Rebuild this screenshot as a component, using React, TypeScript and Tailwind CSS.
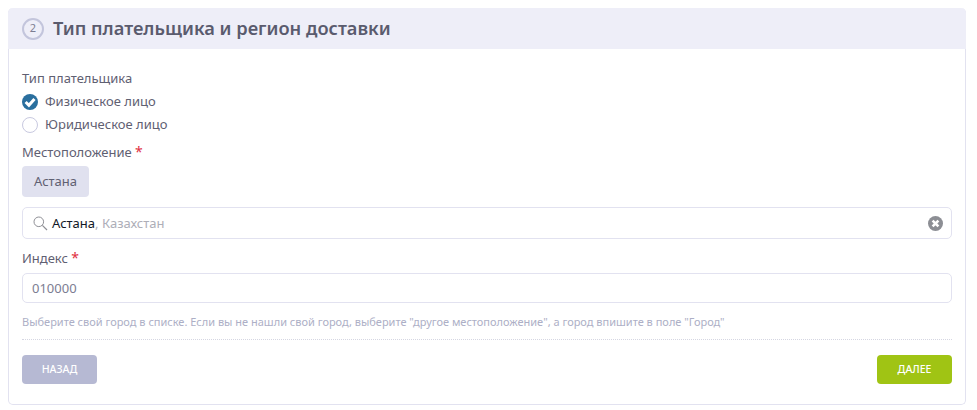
import React from "react";

const App = () => {
  return (
    <div className="h-[410px] w-[977px] bg-white pl-2 pr-[11px] pt-2 font-['Noto_Sans','Open_Sans',sans-serif] text-[13px] text-[#5f6072]">
      <div className="h-[397px] rounded-[5px] border border-t-0 border-[#e2e2f0]">
        {/* Header */}
        <div className="-mx-px flex h-[41px] items-center gap-[9px] rounded-t-[5px] bg-[#eeeef8] pl-[14px]">
          <div className="flex h-[22px] w-[22px] items-center justify-center rounded-full border-2 border-[#c3c5dc] text-[11px] text-[#7c7d92]">
            2
          </div>
          <h2 className="text-[18.25px] font-semibold leading-none text-[#5a5b6e]">
            Тип плательщика и регион доставки
          </h2>
        </div>

        <div className="px-[13px] pt-[19px]">
          <div className="h-[20px] leading-[20px]">Тип плательщика</div>

          {/* Radios */}
          <div className="mt-[2px] flex h-[23px] items-center gap-[7px]">
            <svg width="16" height="16" viewBox="0 0 16 16">
              <circle cx="8" cy="8" r="8" fill="#2a6f9e" />
              <path d="M3.6 8 L6.9 11.3 L12.5 5" fill="none" stroke="#fff" strokeWidth="3" />
            </svg>
            <span>Физическое лицо</span>
          </div>
          <div className="flex h-[23px] items-center gap-[7px]">
            <div className="h-4 w-4 rounded-full border-[1.5px] border-[#c8c9e0] bg-white" />
            <span>Юридическое лицо</span>
          </div>

          {/* Location */}
          <div className="mt-[5px] h-[20px] leading-[22px]">
            Местоположение <span className="text-[14px] leading-none text-[#e0303f]">*</span>
          </div>
          <div className="mt-[5px] flex h-[31px] w-[67px] items-center justify-center rounded-[4px] bg-[#e0e1ef]">
            Астана
          </div>
          <div className="mt-[10px] flex h-[32px] items-center rounded-[5px] border border-[#e2e2f0] pl-[10px] pr-[8px]">
            <svg width="15" height="15" viewBox="0 0 15 15" fill="none" stroke="#8f9096">
              <circle cx="5.8" cy="5.8" r="4.8" strokeWidth="1" />
              <path d="M9.4 9.4 L14 14" strokeWidth="1.2" />
            </svg>
            <span className="ml-[4px] pt-[2px] text-[#111827]">Астана</span>
            <span className="pt-[2px] text-[#adaeb8]">, Казахстан</span>
            <svg className="ml-auto" width="15" height="15" viewBox="0 0 15 15">
              <circle cx="7.5" cy="7.5" r="7.5" fill="#8c8e94" />
              <path d="M4.6 4.6 L10.4 10.4 M10.4 4.6 L4.6 10.4" stroke="#fff" strokeWidth="2.6" />
            </svg>
          </div>

          {/* Postcode */}
          <div className="mt-2 h-[20px] leading-[22px]">
            Индекс <span className="text-[14px] leading-none text-[#e0303f]">*</span>
          </div>
          <div className="mt-[6px] flex h-[30px] items-center rounded-[5px] border border-[#e2e2f0] px-[9px] pt-[2px] text-[#7c7d92]">
            010000
          </div>
          <p className="mt-[11px] h-[15px] text-[11px] leading-[15px] text-[#adafc6]">
            Выберите свой город в списке. Если вы не нашли свой город, выберите "другое местоположение", а город впишите в поле "Город"
          </p>
          <div className="mt-[10px] border-t border-dotted border-[#d5d6e2]" />

          {/* Buttons */}
          <div className="mt-[15px] flex justify-between">
            <button className="h-[29px] w-[75px] rounded-[4px] bg-[#b6b9d3] text-[10.5px] font-medium text-white">
              НАЗАД
            </button>
            <button className="h-[29px] w-[75px] rounded-[4px] bg-[#a0c414] text-[10.5px] font-medium text-white">
              ДАЛЕЕ
            </button>
          </div>
        </div>
      </div>
    </div>
  );
};

export default App;
